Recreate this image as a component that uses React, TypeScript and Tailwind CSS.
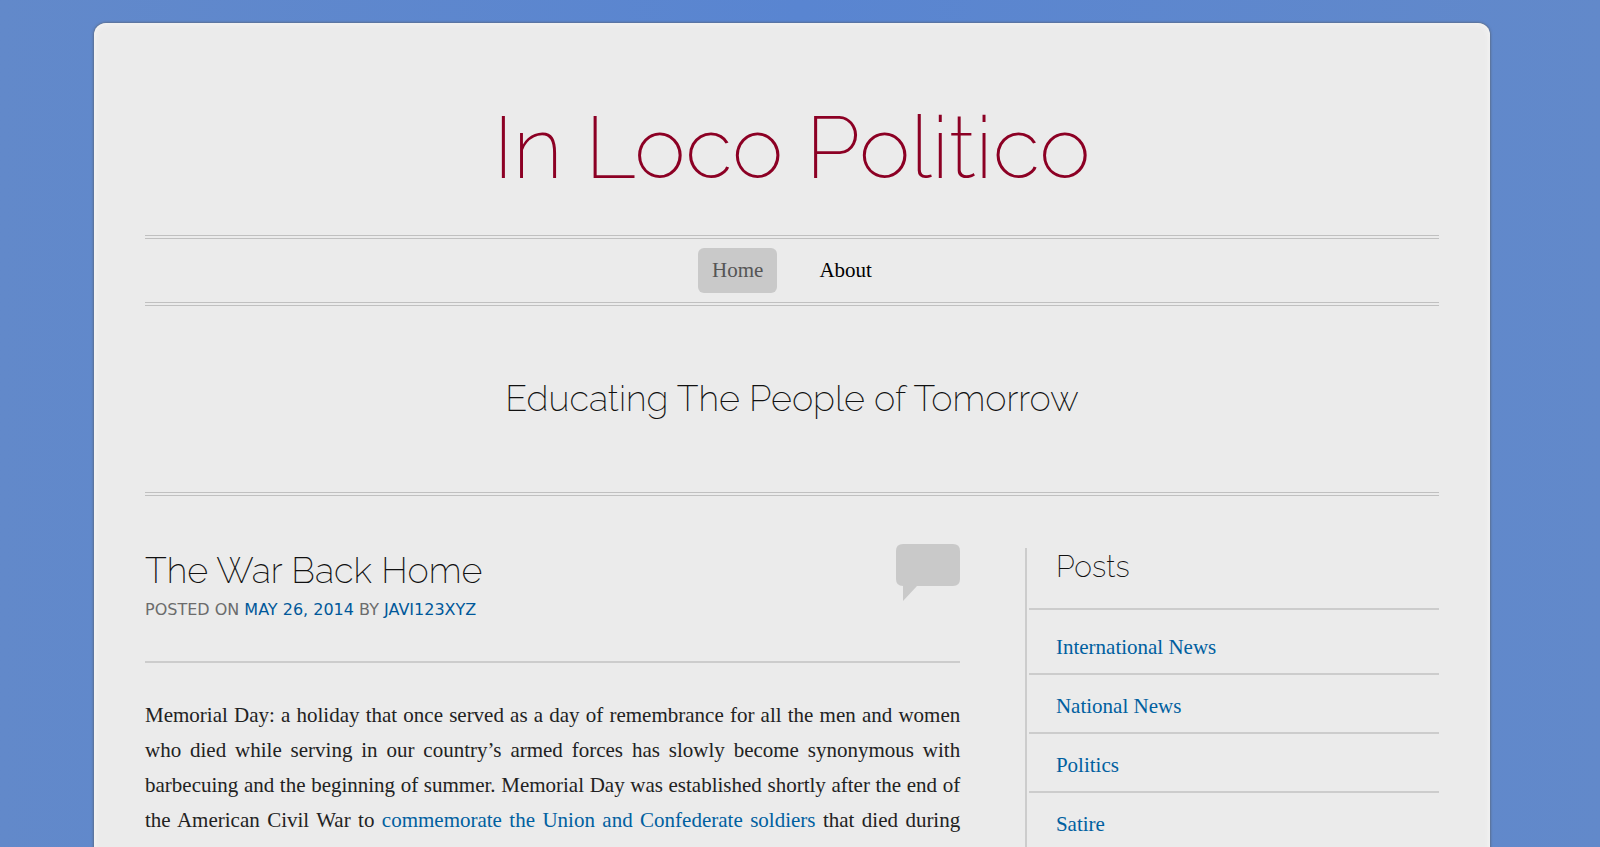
const NAV_ITEMS = [
  { label: "Home", href: "#home", active: true },
  { label: "About", href: "#about", active: false },
]

const CATEGORIES = [
  { label: "International News", href: "#international-news" },
  { label: "National News", href: "#national-news" },
  { label: "Politics", href: "#politics" },
  { label: "Satire", href: "#satire" },
]

function Header() {
  return (
    <header className="text-center">
      <h1 className="pt-[78px] pb-[42px] font-['Raleway','Lato',sans-serif] text-[87px] leading-[92px] font-extralight text-[#8c0024]">
        In Loco Politico
      </h1>
      <nav
        aria-label="Main"
        className="flex justify-center gap-7 border-y-4 border-double border-[#c0c0c0] py-[9px]"
      >
        {NAV_ITEMS.map((item) => (
          <a
            key={item.label}
            href={item.href}
            className={
              item.active
                ? "rounded-md bg-[#c9c9c9] px-[14px] text-[21px] leading-[45px] text-[#555555]"
                : "px-[14px] text-[21px] leading-[45px] text-black"
            }
          >
            {item.label}
          </a>
        ))}
      </nav>
      <p className="border-b-4 border-double border-[#c0c0c0] pt-[70px] pb-[72px] font-['Raleway','Lato',sans-serif] text-[36px] leading-[44px] font-extralight text-[#111111]">
        Educating The People of Tomorrow
      </p>
    </header>
  )
}

function Post() {
  return (
    <article className="w-[63%]">
      <div className="flex items-start justify-between border-b-2 border-[#cccccc] pb-9">
        <div>
          <h2 className="pt-1 font-['Raleway','Lato',sans-serif] text-[36px] leading-[44px] font-extralight text-[#111111]">
            The War Back Home
          </h2>
          <p className="pt-[3px] font-['DejaVu_Sans',sans-serif] text-[16px] leading-[30px] text-[#6c6c6c] uppercase">
            Posted on{" "}
            <a href="#date" className="text-[#00589a]">
              May 26, 2014
            </a>{" "}
            by{" "}
            <a href="#author" className="text-[#00589a]">
              javi123xyz
            </a>
          </p>
        </div>
        <a href="#comments" aria-label="Leave a comment">
          <svg width="64" height="57" viewBox="0 0 64 57" fill="#c9c9c9">
            <path d="M7 0H57Q64 0 64 7V35Q64 42 57 42H21L7 57V42Q0 42 0 35V7Q0 0 7 0Z" />
          </svg>
        </a>
      </div>
      <p className="pt-[35px] text-justify text-[21px] leading-[35px] text-[#222222] [text-align-last:justify]">
        Memorial Day: a holiday that once served as a day of remembrance for all the men and women who
        died while serving in our country’s armed forces has slowly become synonymous with barbecuing
        and the beginning of summer. Memorial Day was established shortly after the end of the American
        Civil War to{" "}
        <a href="#memorial" className="text-[#0060a0]">
          commemorate the Union and Confederate soldiers
        </a>{" "}
        that died during
      </p>
    </article>
  )
}

function Sidebar() {
  return (
    <aside className="mt-1 w-[32%] border-l-2 border-[#cccccc] pl-[2px]">
      <h2 className="border-b-2 border-[#cccccc] pb-[23px] pl-[27px] font-['Raleway','Lato',sans-serif] text-[30px] leading-[37px] font-extralight text-[#111111]">
        Posts
      </h2>
      <ul className="pt-[6px]">
        {CATEGORIES.map((category) => (
          <li key={category.label} className="border-b-2 border-[#cccccc] pt-[18px] pb-[13px] pl-[27px]">
            <a href={category.href} className="block text-[21px] leading-[26px] text-[#0060a0]">
              {category.label}
            </a>
          </li>
        ))}
      </ul>
    </aside>
  )
}

export default function App() {
  return (
    <div className="h-screen overflow-hidden bg-[#5e88ce] bg-linear-to-r from-[#6289ca] via-[#5985d1] to-[#6289ca] pt-[23px] pr-[110px] pl-[94px] font-['Liberation_Serif',serif]">
      <div className="min-h-screen rounded-t-xl bg-[#ebebeb] px-[51px] shadow-[0_0_3px_#555555,inset_0_0_6px_#f8f8f8]">
        <Header />
        <main className="flex items-stretch justify-between pt-12">
          <Post />
          <Sidebar />
        </main>
      </div>
    </div>
  )
}
